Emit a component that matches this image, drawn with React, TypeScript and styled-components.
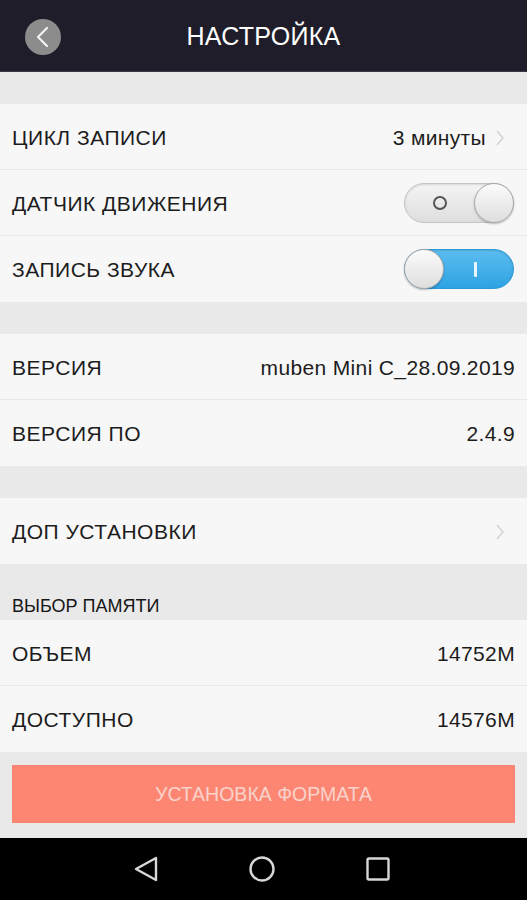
import React from "react";
import styled, { createGlobalStyle } from "styled-components";

const Global = createGlobalStyle`
  html, body { margin: 0; padding: 0; background: #e9e9e9; }
  body { font-family: "Liberation Sans", Arial, "Noto Sans", sans-serif; }
  * { box-sizing: border-box; }
`;

const Screen = styled.div`
  width: 527px;
  height: 900px;
  display: flex;
  flex-direction: column;
  background: #e9e9e9;
  overflow: hidden;
`;

const Header = styled.header`
  height: 72px;
  flex: 0 0 72px;
  background: #1f1d29;
  display: flex;
  align-items: center;
  justify-content: center;
  position: relative;
  border-bottom: 1px solid #3a3848;
  padding-top: 2px;
`;

const BackButton = styled.div`
  position: absolute;
  left: 25px;
  top: 19px;
  width: 36px;
  height: 36px;
  border-radius: 50%;
  background: #8c8c8c;
  display: flex;
  align-items: center;
  justify-content: center;
`;

const Title = styled.h1`
  margin: 0;
  color: #ffffff;
  font-size: 25px;
  font-weight: 400;
  letter-spacing: 0.3px;
`;

const Content = styled.div`
  flex: 1;
  display: flex;
  flex-direction: column;
`;

const Gap = styled.div`
  height: 32px;
  flex: 0 0 32px;
`;

const Group = styled.div`
  background: #f7f7f7;
  display: flex;
  flex-direction: column;
`;

const Row = styled.div<{ $last?: boolean }>`
  height: 66px;
  display: flex;
  align-items: center;
  justify-content: space-between;
  padding: 2px 12px 0 12px;
  border-bottom: ${(p) => (p.$last ? "none" : "1px solid #e8e8e8")};
`;

const Label = styled.span`
  font-size: 21px;
  letter-spacing: 0.5px;
  color: #1c1c1c;
`;

const Value = styled.span<{ $arrow?: boolean }>`
  font-size: 21px;
  letter-spacing: 0.35px;
  color: #1c1c1c;
  display: flex;
  align-items: center;
  gap: 9px;
  margin-right: ${(p) => (p.$arrow ? "10px" : "0")};
`;

const SectionTitle = styled.div`
  height: 56px;
  display: flex;
  align-items: flex-end;
  padding: 0 12px 3px;
  font-size: 18px;
  color: #161616;
`;

const Toggle = styled.div<{ $on: boolean }>`
  width: 110px;
  height: 40px;
  border-radius: 20px;
  position: relative;
  margin-right: 1px;
  margin-top: -2px;
  background: ${(p) =>
    p.$on
      ? "linear-gradient(#5bbdf0, #2ea3e3)"
      : "linear-gradient(#f4f4f4, #dedede)"};
  border: 1px solid ${(p) => (p.$on ? "#2b9ad6" : "#c4c4c4")};
  box-shadow: inset 0 1px 2px rgba(0, 0, 0, 0.12);
`;

const Thumb = styled.div<{ $on: boolean }>`
  position: absolute;
  top: -1px;
  ${(p) => (p.$on ? "left: -1px;" : "right: -1px;")}
  width: 40px;
  height: 40px;
  border-radius: 50%;
  background: linear-gradient(#fbfbfb, #dedede);
  border: 1px solid #a8a8a8;
  box-shadow: 0 1px 2px rgba(0, 0, 0, 0.25);
`;

const OffMark = styled.div`
  position: absolute;
  left: 28px;
  top: 12px;
  width: 14px;
  height: 14px;
  border-radius: 50%;
  border: 2px solid #555;
`;

const OnMark = styled.div`
  position: absolute;
  left: 69px;
  top: 12px;
  width: 3px;
  height: 15px;
  border-radius: 1px;
  background: #eaf6fd;
`;

const Bottom = styled.div`
  flex: 1;
  display: flex;
  flex-direction: column;
  padding: 13px 12px 0;
`;

const FormatButton = styled.button`
  height: 58px;
  width: 100%;
  border: none;
  background: #fd8672;
  color: #f8d3cb;
  font-family: inherit;
  font-size: 19.5px;
`;

const NavBar = styled.nav`
  height: 62px;
  flex: 0 0 62px;
  background: #000;
  display: flex;
  align-items: center;
  justify-content: center;
  gap: 90px;
  padding-bottom: 1px;
  padding-right: 4px;
`;

const Chevron = () => (
  <svg width="10" height="18" viewBox="0 0 10 18">
    <path d="M2 2 L8 9 L2 16" fill="none" stroke="#d4d4d4" strokeWidth="1.6" />
  </svg>
);

const Switch = ({ on }: { on: boolean }) => (
  <Toggle $on={on}>
    {on ? <OnMark /> : <OffMark />}
    <Thumb $on={on} />
  </Toggle>
);

export default function App() {
  return (
    <>
      <Global />
      <Screen>
        <Header>
          <BackButton>
            <svg width="20" height="24" viewBox="0 0 20 24">
              <path d="M14 3 L5 12 L14 21" fill="none" stroke="#f2f2f2" strokeWidth="2.2" strokeLinecap="round" strokeLinejoin="round" />
            </svg>
          </BackButton>
          <Title>НАСТРОЙКА</Title>
        </Header>
        <Content>
          <Gap />
          <Group>
            <Row>
              <Label>ЦИКЛ ЗАПИСИ</Label>
              <Value $arrow>
                3 минуты <Chevron />
              </Value>
            </Row>
            <Row>
              <Label>ДАТЧИК ДВИЖЕНИЯ</Label>
              <Switch on={false} />
            </Row>
            <Row $last>
              <Label>ЗАПИСЬ ЗВУКА</Label>
              <Switch on={true} />
            </Row>
          </Group>
          <Gap />
          <Group>
            <Row>
              <Label>ВЕРСИЯ</Label>
              <Value>muben Mini C_28.09.2019</Value>
            </Row>
            <Row $last>
              <Label>ВЕРСИЯ ПО</Label>
              <Value>2.4.9</Value>
            </Row>
          </Group>
          <Gap />
          <Group>
            <Row $last>
              <Label>ДОП УСТАНОВКИ</Label>
              <Value $arrow>
                <Chevron />
              </Value>
            </Row>
          </Group>
          <SectionTitle>ВЫБОР ПАМЯТИ</SectionTitle>
          <Group>
            <Row>
              <Label>ОБЪЕМ</Label>
              <Value>14752M</Value>
            </Row>
            <Row $last>
              <Label>ДОСТУПНО</Label>
              <Value>14576M</Value>
            </Row>
          </Group>
          <Bottom>
            <FormatButton>УСТАНОВКА ФОРМАТА</FormatButton>
          </Bottom>
        </Content>
        <NavBar>
          <svg width="26" height="26" viewBox="0 0 26 26">
            <path d="M23 2 L3 13 L23 24 Z" fill="none" stroke="#d8d8d8" strokeWidth="2.4" strokeLinejoin="round" />
          </svg>
          <svg width="26" height="26" viewBox="0 0 26 26">
            <circle cx="13" cy="13" r="11.5" fill="none" stroke="#d8d8d8" strokeWidth="2.4" />
          </svg>
          <svg width="26" height="26" viewBox="0 0 26 26">
            <rect x="2.5" y="2.5" width="21" height="21" rx="1.5" fill="none" stroke="#d8d8d8" strokeWidth="2.4" />
          </svg>
        </NavBar>
      </Screen>
    </>
  );
}
